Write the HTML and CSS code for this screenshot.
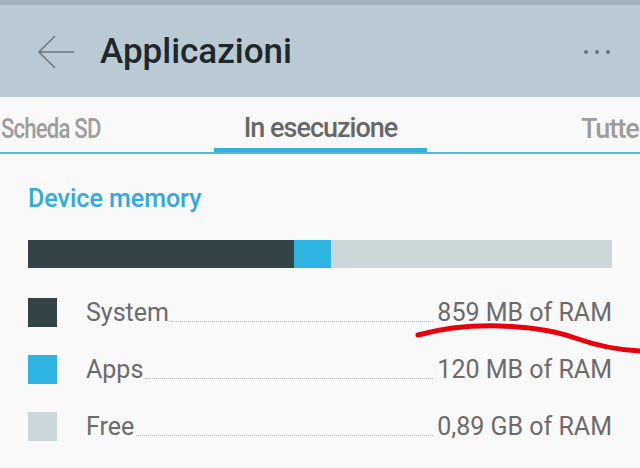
FILE: index.html
```html
<!DOCTYPE html>
<html lang="it">
<head>
    <meta charset="UTF-8">
    <meta name="viewport" content="width=device-width, initial-scale=1.0">
    <title>Applicazioni</title>
    <link rel="stylesheet" href="styles.css">
</head>
<body>
    <div class="statusStrip"></div>
    <header class="appBar">
        <svg class="backIcon" width="38" height="36" viewBox="0 0 38 36">
            <path d="M2 18 H37 M18 2 L2 18 L18 34" fill="none" stroke="#6f777c" stroke-width="1.6"/>
        </svg>
        <h1>Applicazioni</h1>
        <div class="moreDots"><span></span><span></span><span></span></div>
    </header>

    <nav class="tabs">
        <div class="tab tabLeft">Scheda SD</div>
        <div class="tab tabActive">In esecuzione</div>
        <div class="tab tabRight">Tutte</div>
    </nav>

    <main class="content">
        <h2 class="sectionTitle">Device memory</h2>
        <div class="memBar">
            <div class="seg colSystem" style="width: 266px"></div>
            <div class="seg colApps" style="width: 37px"></div>
            <div class="seg colFree segRest"></div>
        </div>

        <ul class="legend">
            <li class="legendRow">
                <span class="swatch colSystem"></span>
                <span class="label">System</span>
                <span class="leader"></span>
                <span class="value">859 MB of RAM</span>
            </li>
            <li class="legendRow">
                <span class="swatch colApps"></span>
                <span class="label">Apps</span>
                <span class="leader"></span>
                <span class="value">120 MB of RAM</span>
            </li>
            <li class="legendRow">
                <span class="swatch colFree"></span>
                <span class="label">Free</span>
                <span class="leader"></span>
                <span class="value">0,89 GB of RAM</span>
            </li>
        </ul>
    </main>

    <!-- hand-drawn red mark over the screenshot -->
    <svg class="scribble" width="640" height="468" viewBox="0 0 640 468">
        <path d="M418 335 C440 329 465 325 500 326 C530 327 555 331 575 338 C595 345 615 350 640 351" fill="none" stroke="#e8000b" stroke-width="5" stroke-linecap="round"/>
    </svg>
</body>
</html>
```

FILE: styles.css
```css
body {
    margin: 0;
    width: 640px;
    height: 468px;
    overflow: hidden;
    background: #f9f9f9;
    font-family: 'Roboto', 'Liberation Sans', sans-serif;
    position: relative;
}

.statusStrip {
    height: 5px;
    background: #a0b1bd;
}

.appBar {
    height: 92px;
    background: #b9cad5;
    display: flex;
    align-items: center;
    padding: 0 30px 0 37px;
}

.backIcon {
    display: block;
    margin-top: 2px;
}

.appBar h1 {
    margin: 0 0 0 25px;
    font-size: 35px;
    font-weight: 500;
    color: #212629;
    flex: 1;
}

.moreDots {
    display: flex;
    gap: 7px;
    margin-top: 2px;
}

.moreDots span {
    width: 4px;
    height: 4px;
    border-radius: 50%;
    background: #6e7378;
}

.tabs {
    height: 55px;
    border-bottom: 2px solid #55b9d6;
    position: relative;
    overflow: hidden;
}

.tab {
    position: absolute;
    top: 0;
    height: 55px;
    box-sizing: border-box;
    padding-top: 8px;
    display: flex;
    align-items: center;
    justify-content: center;
    font-size: 27px;
    font-weight: 500;
    color: #9d9d9d;
    letter-spacing: -1px;
    white-space: nowrap;
}

.tabLeft {
    left: 1px;
    transform: scaleX(0.82);
    transform-origin: left center;
}

.tabActive {
    left: 214px;
    width: 213px;
    color: #676767;
    border-bottom: 4px solid #35b0dc;
    padding-top: 10px;
}

.tabRight {
    left: 581px;
}

.content {
    padding: 31px 28px 0 28px;
}

.sectionTitle {
    margin: 0;
    font-size: 25px;
    font-weight: 500;
    color: #33aadb;
    line-height: 28px;
}

.memBar {
    display: flex;
    height: 28px;
    margin-top: 27px;
    width: 584px;
}

.seg {
    height: 100%;
}

.segRest {
    flex: 1;
}

.colSystem {
    background: #344345;
}

.colApps {
    background: #2db4e2;
}

.colFree {
    background: #cbd8d9;
}

.legend {
    list-style: none;
    margin: 16px 0 0 0;
    padding: 0;
    width: 584px;
}

.legendRow {
    display: flex;
    align-items: center;
    height: 57px;
    font-size: 25px;
    color: #6b6b6b;
}

.swatch {
    width: 29px;
    height: 29px;
    flex-shrink: 0;
}

.label {
    margin-left: 29px;
}

.leader {
    flex: 1;
    border-bottom: 1px dotted #b8b8b8;
    margin: 18px 4px 0 2px;
}

.scribble {
    position: absolute;
    left: 0;
    top: 0;
    pointer-events: none;
}
```
